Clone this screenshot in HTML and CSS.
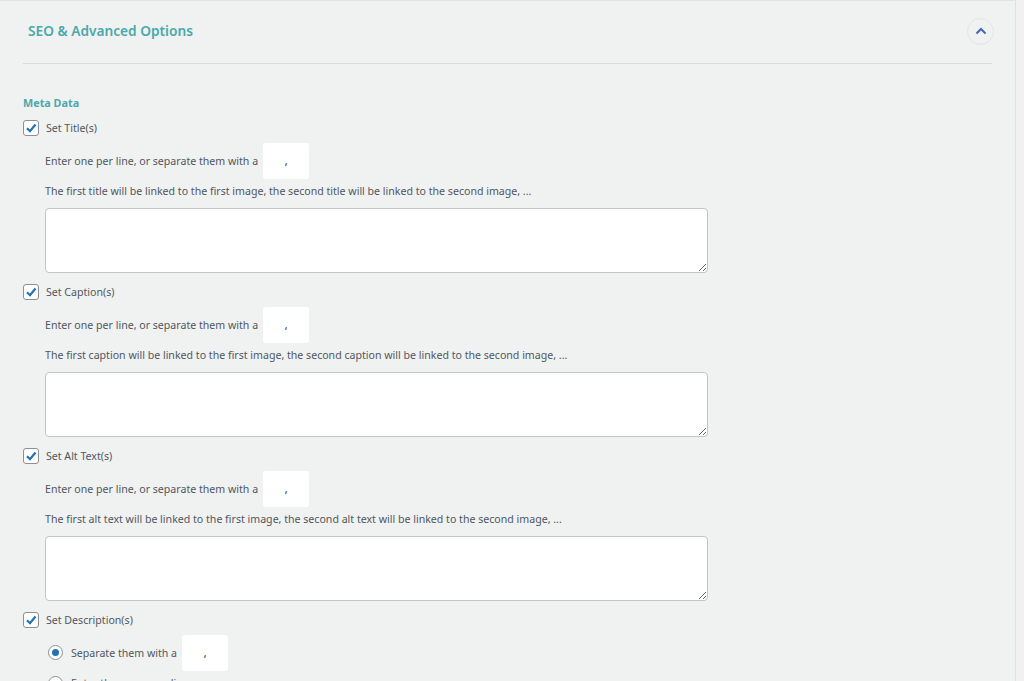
FILE: index.html
```html
<!DOCTYPE html>
<html>
<head>
<meta charset="utf-8">
<link rel="stylesheet" href="styles.css">
</head>
<body>
<div class="panel">
  <div class="header">
    <h2 class="title">SEO &amp; Advanced Options</h2>
    <button class="toggle"><svg width="12" height="8" viewBox="0 0 12 8"><path d="M1.5 6.5 L6 2 L10.5 6.5" fill="none" stroke="#4567b0" stroke-width="2"/></svg></button>
  </div>
  <div class="content">
    <div class="section-title">Meta Data</div>

    <div class="block">
      <label class="check"><span class="box"><svg width="12" height="12" viewBox="0 0 12 12"><path d="M2 6.2 L5 9.2 L10.5 2.5" fill="none" stroke="#2271b1" stroke-width="2.2"/></svg></span>Set Title(s)</label>
      <div class="sub">
        <div class="sep-row">Enter one per line, or separate them with a <span class="sep">,</span></div>
        <div class="hint">The first title will be linked to the first image, the second title will be linked to the second image, ...</div>
        <textarea class="area"></textarea>
      </div>
    </div>

    <div class="block">
      <label class="check"><span class="box"><svg width="12" height="12" viewBox="0 0 12 12"><path d="M2 6.2 L5 9.2 L10.5 2.5" fill="none" stroke="#2271b1" stroke-width="2.2"/></svg></span>Set Caption(s)</label>
      <div class="sub">
        <div class="sep-row">Enter one per line, or separate them with a <span class="sep">,</span></div>
        <div class="hint">The first caption will be linked to the first image, the second caption will be linked to the second image, ...</div>
        <textarea class="area"></textarea>
      </div>
    </div>

    <div class="block">
      <label class="check"><span class="box"><svg width="12" height="12" viewBox="0 0 12 12"><path d="M2 6.2 L5 9.2 L10.5 2.5" fill="none" stroke="#2271b1" stroke-width="2.2"/></svg></span>Set Alt Text(s)</label>
      <div class="sub">
        <div class="sep-row">Enter one per line, or separate them with a <span class="sep">,</span></div>
        <div class="hint">The first alt text will be linked to the first image, the second alt text will be linked to the second image, ...</div>
        <textarea class="area"></textarea>
      </div>
    </div>

    <div class="block">
      <label class="check"><span class="box"><svg width="12" height="12" viewBox="0 0 12 12"><path d="M2 6.2 L5 9.2 L10.5 2.5" fill="none" stroke="#2271b1" stroke-width="2.2"/></svg></span>Set Description(s)</label>
      <div class="radios">
        <label class="radio-row"><span class="radio on"></span>Separate them with a <span class="sep">,</span></label>
        <label class="radio-row second"><span class="radio"></span>Enter them one per line</label>
      </div>
    </div>
  </div>
</div>
</body>
</html>
```

FILE: styles.css
```css
html, body {
  margin: 0;
  padding: 0;
  background: #f1f1f1;
  font-family: "Noto Sans", "Open Sans", sans-serif;
  color: #50575e;
  font-size: 10.6px;
  overflow: hidden;
  height: 681px;
}
.panel {
  width: 969px;
  padding: 0 23px;
  background: #f0f1f1;
  border-top: 1px solid #e2e3e3;
  border-right: 1px solid #dfe0e0;
  height: 700px;
}
.header {
  height: 62px;
  border-bottom: 1px solid #d9dadb;
  display: flex;
  align-items: center;
  justify-content: space-between;
}
.title {
  margin: 0 0 3px 5px;
  font-size: 13.7px;
  font-weight: 600;
  color: #4aa9aa;
}
.toggle {
  width: 27px;
  height: 27px;
  border-radius: 50%;
  border: 1px solid #e3e4e5;
  background: #f0f1f1;
  display: flex;
  align-items: center;
  justify-content: center;
  padding: 0;
  margin: 0 -2px 2px 0;
}
.content {
  padding-top: 31px;
}
.section-title {
  font-weight: 700;
  color: #4aa9aa;
  font-size: 10.8px;
  line-height: 16px;
  margin-bottom: 9px;
}
.check {
  display: flex;
  align-items: center;
  gap: 7px;
  height: 16px;
}
.box {
  width: 14px;
  height: 14px;
  border: 1px solid #8c8f94;
  border-radius: 3px;
  background: #fff;
  display: flex;
  align-items: center;
  justify-content: center;
}
.block {
  margin-bottom: 11px;
}
.sub {
  padding-left: 22px;
  padding-top: 7px;
}
.sep-row {
  display: flex;
  align-items: center;
  height: 36px;
}
.sep {
  display: inline-flex;
  align-items: center;
  justify-content: center;
  width: 46px;
  height: 36px;
  background: #fff;
  border-radius: 3px;
  margin-left: 5px;
  color: #1d2327;
  box-sizing: border-box;
}
.hint {
  margin-top: 4px;
  line-height: 16px;
}
.area {
  display: block;
  margin-top: 9px;
  width: 663px;
  height: 65px;
  box-sizing: border-box;
  border: 1px solid #c3c4c7;
  border-radius: 4px;
  background: #fff;
  resize: both;
}
.radios {
  padding-left: 25px;
  padding-top: 6px;
}
.radio-row {
  display: flex;
  align-items: center;
  height: 37px;
  gap: 8px;
}
.radio-row.second {
  height: 24px;
}
.radio-row .sep {
  margin-left: -3px;
}
.radio {
  width: 13px;
  height: 13px;
  border: 1px solid #8c8f94;
  border-radius: 50%;
  background: #fff;
  display: flex;
  align-items: center;
  justify-content: center;
}
.radio.on::after {
  content: "";
  width: 7px;
  height: 7px;
  border-radius: 50%;
  background: #2271b1;
}
```
